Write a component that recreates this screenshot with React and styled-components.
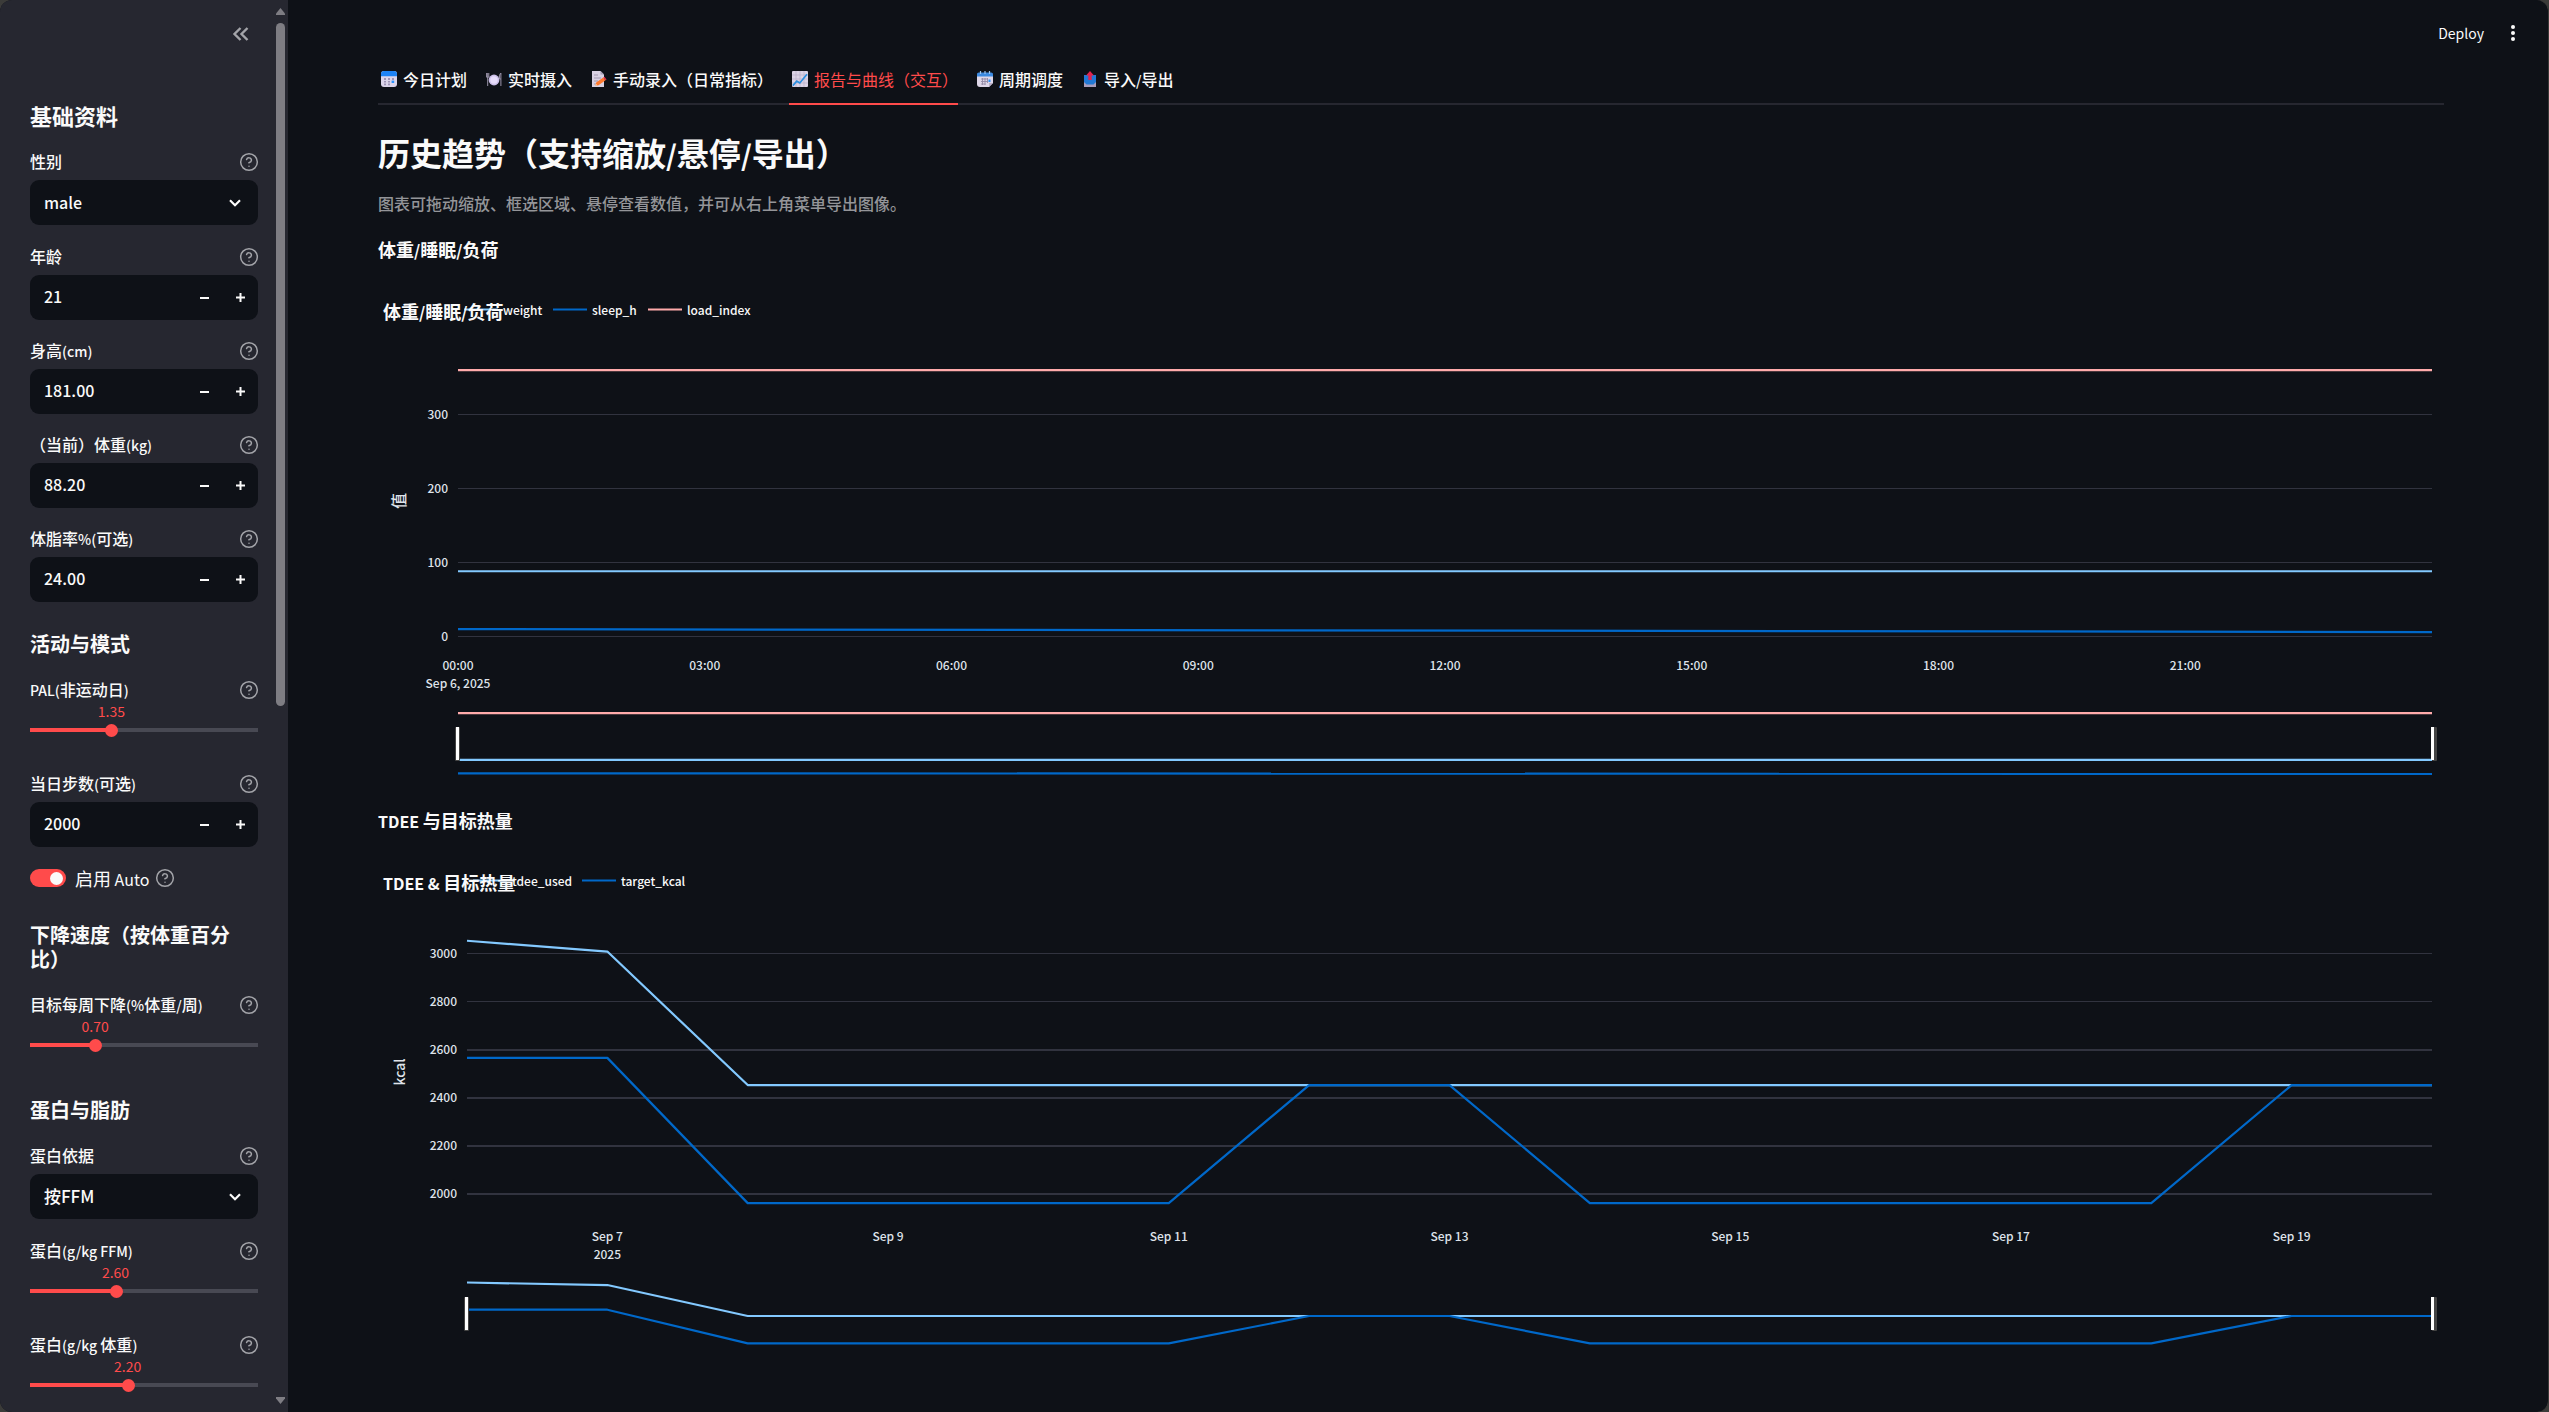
import React, { useId, useLayoutEffect, useRef, useState } from "react";
import styled, { createGlobalStyle } from "styled-components";
import { CircleHelp } from "lucide-react";

const FONT = '"Noto Sans CJK SC", "Noto Sans", sans-serif';

const color = {
  frame: "#3b3b39",
  page: "#0e1117",
  sidebar: "#262730",
  text: "#fafafa",
  muted: "#a3a4a9",
  caption: "#949599",
  primary: "#ff4b4b",
  track: "#484953",
  line: "#262730",
  grid: "#31333f",
  tick: "#dfe3ea",
  lightBlue: "#83c9ff",
  blue: "#0068c9",
  pink: "#ffabab",
};

const GlobalStyle = createGlobalStyle`
  *, *::before, *::after { box-sizing: border-box; }
  body {
    margin: 0;
    background: ${color.frame};
    color: ${color.text};
    font-family: ${FONT};
    font-size: 16px;
  }
  button, input, select { font: inherit; color: inherit; }
  h1, h2, h3, p { margin: 0; }
`;

/* ---------- text with Latin runs set a step smaller than the Han glyphs ---------- */

const Latin = styled.span`
  font-size: ${(p) => p.$size}px;
  line-height: 1;
`;

function splitRuns(text) {
  return text.split(/([\x20-\x7e]+)/).filter(Boolean);
}

function Mixed({ text, latin = 14 }) {
  return splitRuns(text).map((run, i) =>
    /^[\x20-\x7e]/.test(run) ? (
      <Latin key={i} $size={latin}>{run}</Latin>
    ) : (
      <React.Fragment key={i}>{run}</React.Fragment>
    )
  );
}

/* ---------- shell ---------- */

const Shell = styled.div`
  display: flex;
  height: 100vh;
  overflow: hidden;
  border-radius: 12px;
  border-right: 1px solid ${color.frame};
  background: ${color.page};
`;

const Sidebar = styled.aside`
  display: flex;
  flex: none;
  width: 288px;
  background: ${color.sidebar};
`;

const SidebarBody = styled.div`
  display: flex;
  flex-direction: column;
  flex: 1;
  min-width: 0;
  overflow: hidden;
  padding: 0 18px 0 30px;
  & > * { flex-shrink: 0; }
`;

const SidebarTop = styled.div`
  display: flex;
  justify-content: flex-end;
  align-items: center;
  height: 68px;
  margin-bottom: 34px;
  padding-right: 9px;
`;

const IconButton = styled.button`
  display: flex;
  align-items: center;
  justify-content: center;
  flex: none;
  padding: 0;
  border: 0;
  background: none;
  color: ${(p) => p.$tone || color.muted};
  cursor: pointer;
`;

const Scrollbar = styled.div`
  display: flex;
  flex-direction: column;
  align-items: center;
  width: 12px;
  padding: 8px 3px 8px 0;
  color: #7e7d83;
`;

const ScrollTrack = styled.div`
  flex: 1;
  width: 9px;
  margin: 8px 0;
`;

const ScrollThumb = styled.div`
  height: 50%;
  border-radius: 5px;
  background: #7e7d83;
`;

const ProfileTitle = styled.h2`
  margin-bottom: 22px;
  font-size: 22px;
  font-weight: 700;
  line-height: 26px;
`;

const GroupTitle = styled.h3`
  margin: 11px 0 22px;
  font-size: 20px;
  font-weight: 700;
  line-height: 24px;
`;

const LabelRow = styled.div`
  display: flex;
  align-items: center;
  justify-content: space-between;
  height: 24px;
  margin-right: -1px;
`;

const Label = styled.label`
  padding-bottom: 2px;
  font-size: 16px;
  font-weight: 500;
  line-height: 22px;
  white-space: nowrap;
`;

const SelectField = styled.div`
  margin-bottom: 20px;
`;

const NumberField = styled.div`
  margin-bottom: 19px;
`;

const SliderField = styled.div`
  margin-bottom: 32px;
`;

const ControlBox = styled.div`
  display: flex;
  align-items: center;
  height: 45px;
  margin-top: 6px;
  border-radius: 9px;
  background: ${color.page};
`;

const Select = styled.select`
  flex: 1;
  min-width: 0;
  height: 45px;
  padding: 0 14px 2px;
  border: 0;
  background: none;
  appearance: none;
  font-size: ${(p) => p.$size}px;
  font-weight: 500;
`;

const Chevron = styled.svg`
  flex: none;
  margin: 0 17px 0 -29px;
  pointer-events: none;
`;

const NumberInput = styled.input`
  flex: 1;
  min-width: 0;
  height: 45px;
  padding: 0 14px 4px;
  border: 0;
  background: none;
  font-size: 16px;
  font-weight: 500;
  appearance: textfield;
  &::-webkit-inner-spin-button, &::-webkit-outer-spin-button { appearance: none; margin: 0; }
`;

const StepButton = styled(IconButton)`
  width: 36px;
  height: 45px;
`;

const SliderValue = styled.div`
  position: relative;
  height: 18px;
  color: ${color.primary};
  font-size: 14px;
  line-height: 18px;
`;

const SliderOutput = styled.output`
  position: absolute;
  transform: translateX(-50%);
`;

const SliderTrack = styled.div`
  display: flex;
  align-items: center;
  height: 20px;
  background: linear-gradient(to right, ${color.primary} var(--fill), ${color.track} var(--fill)) center / 100% 4px no-repeat;
`;

const Range = styled.input`
  flex: 1;
  min-width: 0;
  height: 20px;
  margin: 0 -7px 0 -6px;
  background: none;
  appearance: none;
  &::-webkit-slider-thumb {
    appearance: none;
    width: 13px;
    height: 13px;
    border-radius: 50%;
    background: ${color.primary};
  }
`;

const ToggleRow = styled.div`
  display: flex;
  align-items: center;
  gap: 6px;
  height: 24px;
  margin-bottom: 22px;
`;

const ToggleLabel = styled.label`
  display: flex;
  align-items: center;
  gap: 9px;
  font-size: 18px;
  line-height: 24px;
`;

const Toggle = styled.input`
  display: flex;
  align-items: center;
  width: 36px;
  height: 18px;
  margin: 0;
  padding: 0 3px;
  border-radius: 9px;
  background: ${color.track};
  appearance: none;
  &::before {
    content: "";
    width: 13px;
    height: 13px;
    border-radius: 50%;
    background: ${color.text};
  }
  &:checked { justify-content: flex-end; background: ${color.primary}; }
`;

function Help() {
  return (
    <IconButton type="button" aria-label="帮助">
      <CircleHelp size={20} strokeWidth={1.8} />
    </IconButton>
  );
}

function FieldLabel({ id, text }) {
  return (
    <LabelRow>
      <Label htmlFor={id}><Mixed text={text} /></Label>
      <Help />
    </LabelRow>
  );
}

function SelectRow({ label, options, size = 16 }) {
  const id = useId();
  return (
    <SelectField>
      <FieldLabel id={id} text={label} />
      <ControlBox>
        <Select id={id} $size={size}>
          {options.map((o) => <option key={o}>{o}</option>)}
        </Select>
        <Chevron width="12" height="8" viewBox="0 0 12 8" fill="none" stroke={color.text} strokeWidth="2.2">
          <path d="M1 1.2 6 6.2 11 1.2" />
        </Chevron>
      </ControlBox>
    </SelectField>
  );
}

function NumberRow({ label, initial, step, digits }) {
  const id = useId();
  const [value, setValue] = useState(initial);
  const bump = (d) => setValue((v) => (Number(v) + d * step).toFixed(digits));
  return (
    <NumberField>
      <FieldLabel id={id} text={label} />
      <ControlBox>
        <NumberInput id={id} type="number" step={step} value={value} onChange={(e) => setValue(e.target.value)} />
        <StepButton type="button" $tone={color.text} aria-label="减少" onClick={() => bump(-1)}>
          <svg width="9" height="9" viewBox="0 0 9 9" stroke="currentColor" strokeWidth="2"><path d="M0 5H9" /></svg>
        </StepButton>
        <StepButton type="button" $tone={color.text} aria-label="增加" onClick={() => bump(1)}>
          <svg width="9" height="9" viewBox="0 0 9 9" stroke="currentColor" strokeWidth="2"><path d="M0 4.5H9M4.5 0V9" /></svg>
        </StepButton>
      </ControlBox>
    </NumberField>
  );
}

function SliderRow({ label, initial, min, max }) {
  const id = useId();
  const [value, setValue] = useState(initial);
  const fill = `${((value - min) / (max - min)) * 100}%`;
  return (
    <SliderField>
      <FieldLabel id={id} text={label} />
      <SliderValue>
        <SliderOutput htmlFor={id} style={{ left: fill }}>{value.toFixed(2)}</SliderOutput>
      </SliderValue>
      <SliderTrack style={{ "--fill": fill }}>
        <Range id={id} type="range" min={min} max={max} step={0.05} value={value} onChange={(e) => setValue(Number(e.target.value))} />
      </SliderTrack>
    </SliderField>
  );
}

/* ---------- tab pictograms ---------- */

const Pictogram = styled.svg`
  flex: none;
  width: 16px;
  height: 16px;
`;

function CalendarIcon() {
  return (
    <Pictogram viewBox="0 0 16 16">
      <rect width="16" height="16" rx="3" fill="#dcd5ea" />
      <path d="M0 5.2V3a3 3 0 0 1 3-3h10a3 3 0 0 1 3 3v2.2Z" fill="#1d83f5" />
      <g fill="#9d93b5">
        <path d="M3 7h2v2H3zM7 7h2v2H7zM11 7h2v2h-2zM3 10h2v1.6H3zM7 10h2v1.6H7zM3 12.6h2v1.6H3zM7 12.6h2v1.6H7z" />
      </g>
      <path d="M10.6 9.6h2.6v2.4h-2.6z" fill="#2a93ff" />
    </Pictogram>
  );
}

function PlateIcon() {
  return (
    <Pictogram viewBox="0 0 16 16">
      <circle cx="8" cy="9" r="5.4" fill="#cbbfe8" />
      <circle cx="8" cy="9" r="3.7" fill="#e6dcfa" />
      <path d="M.6 2v4.2h2.2V2M1.7 2v13M14.9 15V2c-1.2.8-1.6 3-1.5 6h1.5" fill="none" stroke="#9b94ab" strokeWidth="1" />
    </Pictogram>
  );
}

function MemoIcon() {
  return (
    <Pictogram viewBox="0 0 16 16">
      <path d="M1 0h8.5L13 3.6V16H1Z" fill="#d9d1e2" />
      <path d="M9.5 0 13 3.6H9.5Z" fill="#a79fb5" />
      <path d="M3 4h4M3 7h7M3 10h4M3 13h2" stroke="#a198b0" />
      <path d="m4.4 14.8.8-3.2 7-5 2.3 2.6-7 5Z" fill="#ff7a2f" />
      <path d="m12.2 6.6 1.2-.8 2.2 2.6-1.1.8Z" fill="#e8304f" />
      <path d="m4.4 14.8.5-2 1.4 1.5Z" fill="#ffd9b0" />
    </Pictogram>
  );
}

function TrendIcon() {
  return (
    <Pictogram viewBox="0 0 16 16">
      <rect width="16" height="16" rx="1" fill="#dcd4e6" />
      <path d="M4 0v16M8 0v16M12 0v16M0 4h16M0 8h16M0 12h16" stroke="#b9b0c8" strokeWidth=".7" />
      <path d="m.8 14.6 4-4.4 3 1.8L15 3.2" fill="none" stroke="#2b8fe0" strokeWidth="1.7" />
    </Pictogram>
  );
}

function SpiralIcon() {
  return (
    <Pictogram viewBox="0 0 16 16">
      <path d="M0 4h16v8l-4 4H3a3 3 0 0 1-3-3Z" fill="#ded7e8" />
      <path d="M0 5.4V3.2c0-1 .8-1.8 1.8-1.8h12.4c1 0 1.8.8 1.8 1.8v2.2Z" fill="#3c8ae0" />
      <path d="M3.5 0v3M8 0v3M12.5 0v3" stroke="#9fc6ee" strokeWidth="1.2" />
      <path d="M5.5 7v7M8 7v7M10.5 7v5M4 8h7M4 10.5h7M4 13h4.5" stroke="#948ba6" strokeWidth=".9" />
      <path d="M11.5 8.5h2v2.5h-2z" fill="#2a93ff" />
      <path d="M12 16v-4h4Z" fill="#b8afc8" />
    </Pictogram>
  );
}

function OutboxIcon() {
  return (
    <Pictogram viewBox="0 0 16 16">
      <path d="M2 11h12v5H2Z" fill="#a99dbb" />
      <path d="M2 4h12v7l-2.5 2.5h-7L2 11Z" fill="#2178d4" />
      <path d="M8 0l4 4.6H9.7V9H6.3V4.6H4Z" fill="#e2234f" />
    </Pictogram>
  );
}

/* ---------- main area ---------- */

const Main = styled.main`
  flex: 1;
  min-width: 0;
  overflow: hidden;
`;

const TopBar = styled.header`
  display: flex;
  justify-content: flex-end;
  align-items: center;
  gap: 27px;
  height: 60px;
  padding: 6px 33px 0 0;
`;

const DeployButton = styled.button`
  padding: 0;
  border: 0;
  background: none;
  font-size: 14px;
  line-height: 20px;
  cursor: pointer;
`;

const Content = styled.div`
  padding: 0 104px 0 90px;
`;

const TabList = styled.div`
  display: flex;
  gap: 16px;
  height: 45px;
  box-shadow: inset 0 -2px 0 ${color.line};
`;

const Tab = styled.button`
  display: flex;
  align-items: center;
  gap: 6px;
  height: 45px;
  padding: 0 0 5px 3px;
  border: 0;
  border-bottom: 2px solid ${(p) => (p.$active ? color.primary : "transparent")};
  background: none;
  color: ${(p) => (p.$active ? color.primary : color.text)};
  font-size: 16px;
  font-weight: ${(p) => (p.$active ? 400 : 500)};
  line-height: 24px;
  white-space: nowrap;
  cursor: pointer;
`;

const PageTitle = styled.h1`
  margin-top: 27px;
  font-size: 32px;
  font-weight: 700;
  line-height: 40px;
`;

const Caption = styled.p`
  margin-top: 19px;
  color: ${color.caption};
  font-size: 16px;
  font-weight: 500;
  line-height: 24px;
`;

const ChartSection = styled.section`
  margin-top: 19px;
`;

const ChartHeading = styled.h2`
  margin-bottom: 16px;
  font-size: 18px;
  font-weight: 700;
  line-height: 30px;
`;

const ChartFrame = styled.div`
  height: 506px;
`;

const ChartSvg = styled.svg`
  display: block;
  width: 100%;
  height: 506px;
  font-family: ${FONT};
`;

const TickText = styled.text`
  fill: ${color.tick};
  font-size: 12px;
  font-weight: 500;
  text-anchor: ${(p) => p.$anchor || "middle"};
`;

const LegendText = styled.text`
  fill: ${color.text};
  font-size: 12px;
  font-weight: 500;
`;

const TitleText = styled.text`
  fill: ${color.text};
  font-size: 18px;
  font-weight: 700;
`;

const AxisText = styled.text`
  fill: ${color.tick};
  font-size: ${(p) => p.$size}px;
  font-weight: 500;
  text-anchor: middle;
`;

function useWidth() {
  const ref = useRef(null);
  const [width, setWidth] = useState(0);
  useLayoutEffect(() => {
    const node = ref.current;
    const measure = () => setWidth(node.clientWidth);
    measure();
    const observer = new ResizeObserver(measure);
    observer.observe(node);
    return () => observer.disconnect();
  }, []);
  return [ref, width];
}

function Handle({ x, y, side }) {
  return (
    <g>
      <rect x={x - 2 + side} y={y} width="5" height="34" rx="1" fill="#444444" />
      <rect x={x - 2} y={y} width="3" height="33" fill="#ffffff" />
    </g>
  );
}

function Chart({ spec }) {
  const [ref, width] = useWidth();
  const right = width - 12;
  const px = (x) => spec.left + (x / spec.span) * (right - spec.left);
  const points = (values, toY) => values.map(([x, v]) => `${px(x)},${toY(v)}`).join(" ");
  return (
    <ChartFrame ref={ref}>
      {width > 0 && (
        <ChartSvg role="img" aria-label={spec.title}>
          {spec.yTicks.map((t) => (
            <g key={t.value}>
              <rect x={spec.left} y={t.y} width={right - spec.left} height={t.weight} fill={color.grid} />
              <TickText x={spec.left - 10} y={t.y + 5} $anchor="end">{t.value}</TickText>
            </g>
          ))}
          {spec.xTicks.map((t) => (
            <g key={t.label}>
              <TickText x={px(t.at)} y={390}>{t.label}</TickText>
              {t.sub && <TickText x={px(t.at)} y={408}>{t.sub}</TickText>}
            </g>
          ))}
          {spec.series.map((s) => (
            <g key={s.name} fill="none" stroke={s.color} strokeWidth="2.2" strokeLinejoin="round">
              <polyline points={points(s.values, spec.y)} />
              <polyline points={points(s.values, spec.sliderY)} />
            </g>
          ))}
          <Handle x={spec.left} y={spec.handleY} side={-1} />
          <Handle x={right + 1} y={spec.handleY} side={1} />
          {spec.series.map((s) => (
            <g key={s.name}>
              <path d={`M${s.legendX} 29.5h34`} stroke={s.color} strokeWidth="2.2" />
              <LegendText x={s.legendX + 39} y={35}>{s.name}</LegendText>
            </g>
          ))}
          <TitleText x={5} y={39}>
            {splitRuns(spec.title).map((run, i) => (
              <tspan key={i} fontSize={/^[\x20-\x7e]/.test(run) ? 16 : 18}>{run}</tspan>
            ))}
          </TitleText>
          <AxisText $size={spec.axisSize} transform="translate(27 221) rotate(-90)">
            {spec.axis}
          </AxisText>
        </ChartSvg>
      )}
    </ChartFrame>
  );
}

const bodyChart = {
  title: "体重/睡眠/负荷",
  axis: "值",
  axisSize: 16,
  left: 80,
  span: 24,
  handleY: 447,
  y: (v) => 356.5 - v * 0.74,
  sliderY: (v) => 495 - v * 0.172,
  yTicks: [
    { value: 300, y: 134, weight: 1 },
    { value: 200, y: 208, weight: 1 },
    { value: 100, y: 282, weight: 1 },
    { value: 0, y: 356, weight: 1 },
  ],
  xTicks: ["00:00", "03:00", "06:00", "09:00", "12:00", "15:00", "18:00", "21:00"].map((label, i) => ({
    label,
    at: i * 3,
    sub: i === 0 ? "Sep 6, 2025" : null,
  })),
  series: [
    { name: "weight", color: color.lightBlue, legendX: 86, values: [[0, 88.2], [24, 88.2]] },
    { name: "sleep_h", color: color.blue, legendX: 175, values: [[0, 10], [24, 6]] },
    { name: "load_index", color: color.pink, legendX: 270, values: [[0, 360], [24, 360]] },
  ],
};

const energyChart = {
  title: "TDEE & 目标热量",
  axis: "kcal",
  axisSize: 14,
  left: 89,
  span: 14,
  handleY: 446,
  y: (v) => 343 - (v - 2000) * 0.2405,
  sliderY: (v) => 465 - (v - 2453) * 0.0558,
  yTicks: [
    { value: 3000, y: 102, weight: 1 },
    { value: 2800, y: 150, weight: 1 },
    { value: 2600, y: 198, weight: 2 },
    { value: 2400, y: 246, weight: 2 },
    { value: 2200, y: 294, weight: 2 },
    { value: 2000, y: 342, weight: 2 },
  ],
  xTicks: [7, 9, 11, 13, 15, 17, 19].map((day) => ({
    label: `Sep ${day}`,
    at: day - 6,
    sub: day === 7 ? "2025" : null,
  })),
  series: [
    { name: "tdee_used", color: color.lightBlue, legendX: 95, values: [[0, 3053], [1, 3008], [2, 2453], [14, 2453]] },
    {
      name: "target_kcal",
      color: color.blue,
      legendX: 204,
      values: [[0, 2566], [1, 2566], [2, 1962], [5, 1962], [6, 2453], [7, 2453], [8, 1962], [12, 1962], [13, 2453], [14, 2453]],
    },
  ],
};

const tabs = [
  { label: "今日计划", Icon: CalendarIcon },
  { label: "实时摄入", Icon: PlateIcon },
  { label: "手动录入（日常指标）", Icon: MemoIcon },
  { label: "报告与曲线（交互）", Icon: TrendIcon },
  { label: "周期调度", Icon: SpiralIcon },
  { label: "导入/导出", Icon: OutboxIcon },
];

export default function App() {
  const [active, setActive] = useState(3);
  return (
    <>
      <GlobalStyle />
      <Shell>
        <Sidebar>
          <SidebarBody>
            <SidebarTop>
              <IconButton type="button" aria-label="收起侧栏">
                <svg width="17" height="14" viewBox="0 0 17 14" fill="none" stroke="currentColor" strokeWidth="2.4">
                  <path d="M8.5 1 2.5 7l6 6M15.5 1l-6 6 6 6" />
                </svg>
              </IconButton>
            </SidebarTop>
            <ProfileTitle>基础资料</ProfileTitle>
            <SelectRow label="性别" options={["male", "female"]} />
            <NumberRow label="年龄" initial="21" step={1} digits={0} />
            <NumberRow label="身高(cm)" initial="181.00" step={0.01} digits={2} />
            <NumberRow label="（当前）体重(kg)" initial="88.20" step={0.01} digits={2} />
            <NumberRow label="体脂率%(可选)" initial="24.00" step={0.01} digits={2} />
            <GroupTitle>活动与模式</GroupTitle>
            <SliderRow label="PAL(非运动日)" initial={1.35} min={1.1} max={1.8} />
            <NumberRow label="当日步数(可选)" initial="2000" step={1} digits={0} />
            <ToggleRow>
              <ToggleLabel>
                <Toggle type="checkbox" role="switch" defaultChecked />
                <span><Mixed text="启用 Auto" latin={16} /></span>
              </ToggleLabel>
              <Help />
            </ToggleRow>
            <GroupTitle>下降速度（按体重百分比）</GroupTitle>
            <SliderRow label="目标每周下降(%体重/周)" initial={0.7} min={0.5} max={1.2} />
            <GroupTitle>蛋白与脂肪</GroupTitle>
            <SelectRow label="蛋白依据" options={["按FFM", "按体重"]} size={17} />
            <SliderRow label="蛋白(g/kg FFM)" initial={2.6} min={2} max={3.6} />
            <SliderRow label="蛋白(g/kg 体重)" initial={2.2} min={1.6} max={3} />
          </SidebarBody>
          <Scrollbar aria-hidden="true">
            <svg width="9" height="7" viewBox="0 0 9 7" fill="currentColor"><path d="M4.5 0 9 5.5V7H0V5.5Z" /></svg>
            <ScrollTrack><ScrollThumb /></ScrollTrack>
            <svg width="9" height="7" viewBox="0 0 9 7" fill="currentColor"><path d="M4.5 7 0 1.5V0H9V1.5Z" /></svg>
          </Scrollbar>
        </Sidebar>
        <Main>
          <TopBar>
            <DeployButton type="button">Deploy</DeployButton>
            <IconButton type="button" $tone={color.text} aria-label="菜单">
              <svg width="4" height="16" viewBox="0 0 4 16" fill="currentColor">
                <circle cx="2" cy="2" r="2" /><circle cx="2" cy="8" r="2" /><circle cx="2" cy="14" r="2" />
              </svg>
            </IconButton>
          </TopBar>
          <Content>
            <TabList role="tablist">
              {tabs.map(({ label, Icon }, i) => (
                <Tab key={label} type="button" role="tab" aria-selected={i === active} $active={i === active} onClick={() => setActive(i)}>
                  <Icon />
                  <span><Mixed text={label} /></span>
                </Tab>
              ))}
            </TabList>
            <PageTitle><Mixed text="历史趋势（支持缩放/悬停/导出）" latin={28} /></PageTitle>
            <Caption>图表可拖动缩放、框选区域、悬停查看数值，并可从右上角菜单导出图像。</Caption>
            <ChartSection>
              <ChartHeading><Mixed text="体重/睡眠/负荷" latin={16} /></ChartHeading>
              <Chart spec={bodyChart} />
            </ChartSection>
            <ChartSection>
              <ChartHeading><Mixed text="TDEE 与目标热量" latin={16} /></ChartHeading>
              <Chart spec={energyChart} />
            </ChartSection>
          </Content>
        </Main>
      </Shell>
    </>
  );
}
